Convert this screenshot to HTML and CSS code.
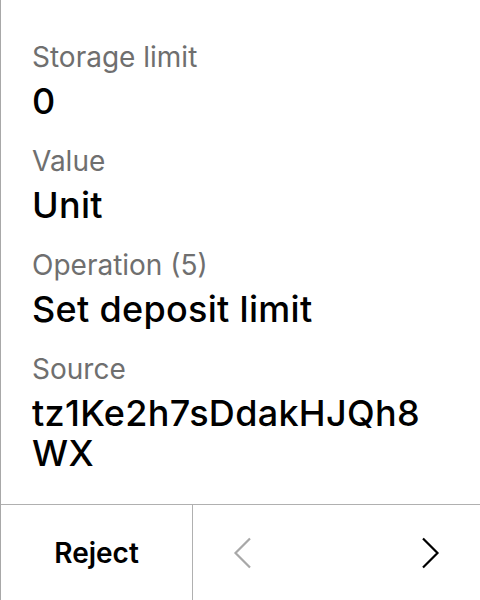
FILE: index.html
```html
<!DOCTYPE html>
<html>
<head>
<meta charset="utf-8">
<link rel="stylesheet" href="styles.css">
</head>
<body>
<div class="screen">
  <div class="content">
    <div class="pair">
      <div class="label">Storage limit</div>
      <div class="value">0</div>
    </div>
    <div class="pair">
      <div class="label">Value</div>
      <div class="value">Unit</div>
    </div>
    <div class="pair">
      <div class="label">Operation (5)</div>
      <div class="value">Set deposit limit</div>
    </div>
    <div class="pair">
      <div class="label">Source</div>
      <div class="value">tz1Ke2h7sDdakHJQh8<br>WX</div>
    </div>
  </div>
  <div class="footer">
    <div class="reject">Reject</div>
    <div class="nav">
      <div class="navbtn">
        <svg width="20" height="32" viewBox="0 0 20 32"><polyline points="17,1.5 2.5,16 17,30.5" fill="none" stroke="#a8a8a8" stroke-width="2.2"/></svg>
      </div>
      <div class="navbtn">
        <svg width="20" height="32" viewBox="0 0 20 32"><polyline points="3,1.5 17.5,16 3,30.5" fill="none" stroke="#000" stroke-width="2.2"/></svg>
      </div>
    </div>
  </div>
</div>
</body>
</html>
```

FILE: styles.css
```css
html, body {
  margin: 0;
  padding: 0;
  background: #fff;
}
.screen {
  width: 480px;
  height: 600px;
  box-sizing: border-box;
  border-left: 1px solid #a8a8a8;
  display: flex;
  flex-direction: column;
  font-family: Inter, "Noto Sans", sans-serif;
  color: #000;
}
.content {
  flex: 1;
  padding: 39px 30px 0 31px;
  display: flex;
  flex-direction: column;
  gap: 22px;
}
.pair {
  display: flex;
  flex-direction: column;
  gap: 6px;
}
.label {
  font-size: 28px;
  line-height: 36px;
  color: #6f6f6f;
}
.value {
  font-size: 36px;
  line-height: 40px;
  font-weight: 500;
  letter-spacing: 0.3px;
}
.footer {
  height: 96px;
  box-sizing: border-box;
  border-top: 1px solid #b0b0b0;
  display: flex;
}
.reject {
  width: 191px;
  border-right: 1px solid #b0b0b0;
  display: flex;
  align-items: center;
  justify-content: center;
  font-size: 28px;
  font-weight: 600;
}
.nav {
  flex: 1;
  display: flex;
  justify-content: space-between;
  align-items: center;
  padding: 0 40px;
}
.navbtn {
  display: flex;
  align-items: center;
  justify-content: center;
}
```
